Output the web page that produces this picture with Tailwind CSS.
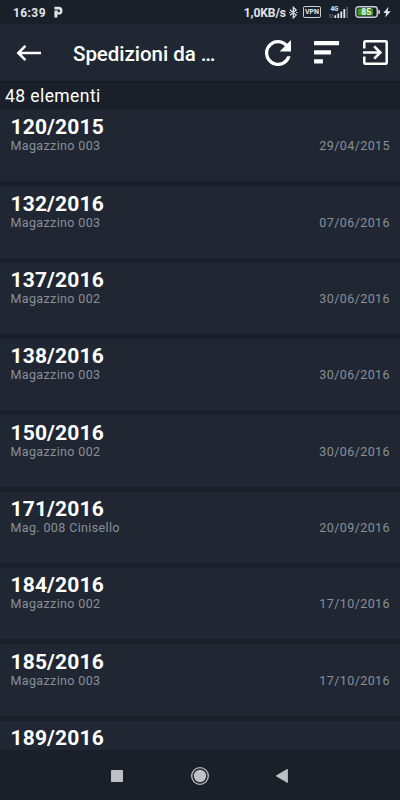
<!DOCTYPE html>
<html lang="it">
<head>
  <meta charset="UTF-8" />
  <meta name="viewport" content="width=device-width, initial-scale=1.0"/>
  <title>Spedizioni</title>
  <script src="https://cdn.jsdelivr.net/npm/@tailwindcss/browser@4"></script>
</head>
<body class="bg-[#19202a] text-white font-[Roboto,sans-serif]">
  <div class="w-[400px] h-[800px] flex flex-col overflow-hidden">

    <!-- status bar -->
    <div class="h-6 shrink-0 flex items-center text-[#e2e4e7]">
      <span class="ml-[13px] w-[34px] text-[12px] leading-6 pt-px font-bold tracking-[0.4px] whitespace-nowrap">16:39</span>
      <svg class="ml-[6px] w-[11px] h-[12px]" viewBox="0 0 11 12">
        <path d="M1.4.8h4.2a3.9 3.9 0 0 1 0 7.8H4.4v2.8h-3V4.6h3.4v1.6h.9a1.3 1.3 0 0 0 0-2.6H1.4z" fill="#e2e4e7"/>
      </svg>
      <span class="ml-auto text-[12px] leading-6 pt-px font-bold tracking-[-0.04px] whitespace-nowrap">1,0KB/s</span>
      <svg class="ml-[3px] w-[9px] h-[13px]" viewBox="0 0 9 13" fill="none" stroke="#e2e4e7" stroke-width="1.2">
        <path d="M1 3.8 7.2 9 4.3 11.8V1.2L7.2 4 1 9.2M0 6.5h1.4M7.2 6.5h1.4"/>
      </svg>
      <span class="ml-[5px] w-[18px] h-[12px] border border-[#c9ccd0] rounded-[2px] flex items-center justify-center text-[7px] leading-none font-bold">VPN</span>
      <!-- signal -->
      <svg class="ml-[8px] w-[21px] h-[14px]" viewBox="0 0 21 14">
        <text x="1.4" y="5.8" font-size="6.4" font-weight="700" fill="#e2e4e7" font-family="Roboto">4G</text>
        <path d="M1 9v4M0 10l1-1M3.2 9v4" stroke="#6b7280" stroke-width=".9" fill="none"/>
        <path d="M5.4 10.2h1.8V13H5.4zM8.4 8.4h1.8V13H8.4zM11.4 6.4h1.8V13h-1.8zM14.4 4h1.8v9h-1.8z" fill="#e2e4e7"/>
        <path d="M17.4 2H19v11h-1.6z" fill="#59616b"/>
      </svg>
      <!-- battery -->
      <svg class="ml-[5px] w-[26px] h-[12px]" viewBox="0 0 26 12">
        <rect x=".8" y=".8" width="21.4" height="10.4" rx="2.6" fill="none" stroke="#c9ccd0" stroke-width="1.4"/>
        <rect x="2.6" y="2.6" width="15.4" height="6.8" rx="1" fill="#3f9a25"/>
        <path d="M23.2 4H24a1 1 0 0 1 1 1v2a1 1 0 0 1-1 1h-.8z" fill="#c9ccd0"/>
        <text x="11.3" y="9" text-anchor="middle" font-size="8.6" font-weight="700" fill="#f1f5f0" font-family="Roboto">85</text>
      </svg>
      <svg class="ml-[2px] mr-[9px] w-[8px] h-[12px]" viewBox="0 0 8 12">
        <path d="M5.6.8.3 6.9h2.9L2.2 11.4 7.7 5.2H4.6z" fill="#e2e4e7"/>
      </svg>
    </div>

    <!-- app bar -->
    <header class="h-[57px] shrink-0 bg-[#202732] flex items-center">
      <svg class="ml-4 w-[25px] h-[18px]" viewBox="0 0 25 18" fill="none" stroke="#fff" stroke-width="2.5">
        <path d="M9.4 1.9 2.3 9l7.1 7.1M1.8 9H25"/>
      </svg>
      <h1 class="ml-8 w-[150px] pt-[2px] text-[20.5px] leading-[28px] font-medium tracking-[-0.03px] whitespace-nowrap">Spedizioni da …</h1>
      <svg class="ml-[42px] w-[26px] h-[26px]" viewBox="4 4 16 16" fill="#fff">
        <path d="M17.65 6.35A7.96 7.96 0 0 0 12 4a8 8 0 1 0 7.73 10h-2.08A6 6 0 1 1 12 6c1.66 0 3.14.69 4.22 1.78L13 11h7V4z"/>
      </svg>
      <svg class="ml-[23px] w-[26px] h-[24px]" viewBox="0 0 26 24" fill="#fff">
        <path d="M.1 0h25v4.3H.1zM.1 9.2h16.9v4.2H.1zM.1 18.2h8.8v4.2H.1z"/>
      </svg>
      <svg class="ml-[22px] w-[27px] h-[27px]" viewBox="0 0 27 27" fill="none" stroke="#fff" stroke-width="2.5">
        <path d="M2.3 9.5V3.3a1 1 0 0 1 1-1h20.4a1 1 0 0 1 1 1v20.4a1 1 0 0 1-1 1H3.3a1 1 0 0 1-1-1v-6.2M1 13.5h16.8M12.2 7.3l6.2 6.2-6.2 6.2"/>
      </svg>
    </header>

    <div class="h-[29px] shrink-0 pl-[5px] border-t border-[#161c24] text-[17.5px] leading-[28px] tracking-[0.42px]">48 elementi</div>

    <!-- shipments -->
    <main id="list" class="flex-1 min-h-0 overflow-hidden"></main>

    <!-- navigation bar -->
    <nav class="h-[50px] shrink-0">
      <svg class="block w-[400px] h-[50px]" viewBox="0 0 400 50" fill="#bfc0c4">
        <rect x="111" y="20" width="12" height="12" rx=".5"/>
        <circle cx="200" cy="26" r="8.3" fill="none" stroke="#bfc0c4" stroke-width="1.3"/>
        <circle cx="200" cy="26" r="6.2"/>
        <path d="M276.4 25.3 287.2 19q.7-.3.7.5v12.8q0 .8-.7.5l-10.8-6.3q-.7-.6 0-1.2z"/>
      </svg>
    </nav>
  </div>

<script>
  const shipments = [
    ["120/2015", "Magazzino 003", "29/04/2015"],
    ["132/2016", "Magazzino 003", "07/06/2016"],
    ["137/2016", "Magazzino 002", "30/06/2016"],
    ["138/2016", "Magazzino 003", "30/06/2016"],
    ["150/2016", "Magazzino 002", "30/06/2016"],
    ["171/2016", "Mag. 008 Cinisello", "20/09/2016"],
    ["184/2016", "Magazzino 002", "17/10/2016"],
    ["185/2016", "Magazzino 003", "17/10/2016"],
    ["189/2016", "", ""]
  ];

  document.getElementById("list").innerHTML = shipments.map(([number, store, date]) => `
    <article class="h-[71.35px] mb-[5px] bg-[#202732] pt-[6.4px] pl-[10.5px] pr-[10px]">
      <h2 class="text-[21px] leading-[23px] font-bold tracking-[0.16px]">${number}</h2>
      <div class="flex justify-between text-[12.5px] leading-[13px] tracking-[0.37px] text-[#8a8f9a]">
        <span>${store}</span>
        <span class="tracking-[0.42px]">${date}</span>
      </div>
    </article>
  `).join("");
</script>
</body>
</html>
